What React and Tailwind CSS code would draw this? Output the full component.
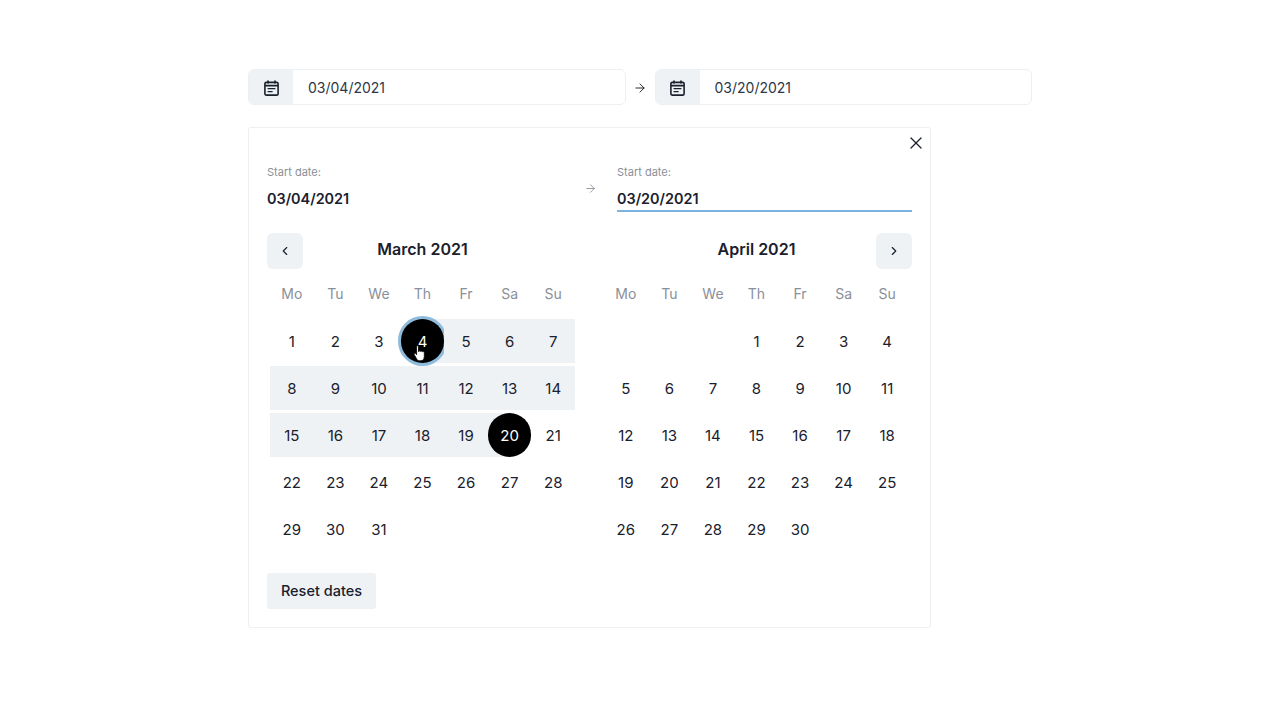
import { ArrowRight, ChevronLeft, ChevronRight, X } from "lucide-react";

const WEEKDAYS = ["Mo", "Tu", "We", "Th", "Fr", "Sa", "Su"];

// March 2021 starts on a Monday, April on a Thursday
const MARCH = Array.from({ length: 31 }, (_, i) => i + 1);
const APRIL = [null, null, null, ...Array.from({ length: 30 }, (_, i) => i + 1)];

function CalendarIcon() {
  return (
    <svg width="15" height="16" viewBox="0 0 15 16" fill="none" stroke="#1a202c" strokeWidth="1.6">
      <rect x="0.9" y="2.4" width="13.2" height="12.7" rx="1.4" />
      <path d="M1 5.6h13" strokeWidth="1.9" />
      <path d="M4 0.4v3M11 0.4v3" strokeWidth="1.7" />
      <path d="M3.6 8.6h7.8M3.6 11.6h5" strokeWidth="1.4" />
    </svg>
  );
}

function HandCursor() {
  return (
    <svg
      className="absolute left-[12px] top-[26px]"
      width="14"
      height="17"
      viewBox="0 0 14 17"
      fill="#fff"
      stroke="#000"
      strokeWidth="0.8"
    >
      <path d="M3.6 1.6c0-1.2 1.9-1.2 1.9 0v5l.5-.1c.1-1 1.7-1 1.8.1.3-.8 1.7-.7 1.8.3.4-.7 1.7-.4 1.7.6v4.2c0 2-1.2 4-3.4 4H6.4c-1.5 0-2.2-.8-2.9-2L1.2 9.6c-.6-1.1.8-2 1.6-1l.8 1.1z" />
    </svg>
  );
}

function DateField({ value }) {
  return (
    <div className="flex h-9 flex-1 overflow-hidden rounded-md border border-[#edf0f3]">
      <div className="flex w-[44px] items-center justify-center bg-[#eef2f5] pt-[1px]">
        <CalendarIcon />
      </div>
      <div className="flex flex-1 items-center pt-[1px] pl-[15px] text-[14px] text-[#2d3748]">{value}</div>
    </div>
  );
}

function DayCell({ day, month }) {
  if (!day) return <div className="h-11" />;

  const isMarch = month === "march";
  const isStart = isMarch && day === 4;
  const isEnd = isMarch && day === 20;
  const inRange = isMarch && day > 4 && day < 20;

  return (
    <div className="relative flex h-11 items-center justify-center">
      {inRange && <div className="absolute inset-0 bg-[#eef2f5]" />}
      {isStart && <div className="absolute inset-y-0 left-1/2 right-0 bg-[#eef2f5]" />}
      {isEnd && <div className="absolute inset-y-0 left-0 right-1/2 bg-[#eef2f5]" />}
      <div
        className={[
          "relative flex size-11 items-center justify-center rounded-full pt-[2px] text-[15px]",
          isStart || isEnd ? "bg-black text-white" : "text-[#1a202c]",
          isStart ? "ring-[3px] ring-[#8fbbdd]" : "",
        ].join(" ")}
      >
        {day}
        {isStart && <HandCursor />}
      </div>
    </div>
  );
}

function NavButton({ children }) {
  return (
    <button type="button" className="flex size-9 items-center justify-center rounded-md bg-[#eef2f5] text-[#1a202c]">
      {children}
    </button>
  );
}

function Month({ title, month, days, side }) {
  const isLeft = side === "left";
  return (
    <div className={`flex w-[308px] flex-col ${isLeft ? "items-end" : "items-start"}`}>
      <div className="flex h-9 w-full items-center">
        {isLeft ? (
          <NavButton>
            <ChevronLeft size={14} strokeWidth={2} />
          </NavButton>
        ) : (
          <div className="w-[33px]" />
        )}
        <h2 className="mb-1 flex-1 text-center text-[16px] leading-6 font-semibold text-[#1a202c]">{title}</h2>
        {isLeft ? (
          <div className="w-[33px]" />
        ) : (
          <NavButton>
            <ChevronRight size={14} strokeWidth={2} />
          </NavButton>
        )}
      </div>
      <div className="mt-[13px] grid w-[305px] grid-cols-7 text-center text-[14px] leading-[24px] text-[#8a9099]">
        {WEEKDAYS.map((d) => (
          <div key={d}>{d}</div>
        ))}
      </div>
      <div className="mt-[13px] grid w-[305px] grid-cols-7 gap-y-[3px]">
        {days.map((day, i) => (
          <DayCell key={i} day={day} month={month} />
        ))}
      </div>
    </div>
  );
}

function DateSummary({ value, active }) {
  return (
    <div className="w-[295px]">
      <div className="text-[11px] leading-4 text-[#8a9099]">Start date:</div>
      <div
        className={[
          "mt-[8px] mb-[1px] h-[24px] text-[14.4px] leading-[22px] font-semibold text-[#1a202c]",
          active ? "border-b-2 border-[#7db3e0]" : "",
        ].join(" ")}
      >
        {value}
      </div>
    </div>
  );
}

export default function App() {
  return (
    <div
      className="min-h-[720px] bg-white pt-[69px] pl-[248px]"
      style={{ fontFamily: "Inter, sans-serif" }}
    >
      <div className="flex w-[784px] items-center">
        <DateField value="03/04/2021" />
        <div className="flex w-[29px] justify-center pt-[1px] text-[#1a202c]">
          <ArrowRight size={14} strokeWidth={1.6} />
        </div>
        <DateField value="03/20/2021" />
      </div>

      <div className="mt-[22px] h-[501px] w-[683px] rounded-[3px] border border-[#edf0f3] px-[18px]">
        <div className="flex h-[36px] items-center justify-end pb-[6px]">
          <X size={20} strokeWidth={1.5} className="mr-[-14px] text-[#1a202c]" />
        </div>

        <div className="flex items-start">
          <DateSummary value="03/04/2021" />
          <div className="flex w-[55px] justify-center pt-[18px] pl-[1px] text-[#7f8792]">
            <ArrowRight size={13} strokeWidth={1.5} />
          </div>
          <DateSummary value="03/20/2021" active />
        </div>

        <div className="mt-[20px] flex gap-[29px]">
          <Month title="March 2021" month="march" days={MARCH} side="left" />
          <Month title="April 2021" month="april" days={APRIL} side="right" />
        </div>

        <button
          type="button"
          className="mt-[22px] h-9 w-[109px] rounded-[3px] bg-[#eef2f5] text-[14.5px] font-medium text-[#1a202c]"
        >
          Reset dates
        </button>
      </div>
    </div>
  );
}
